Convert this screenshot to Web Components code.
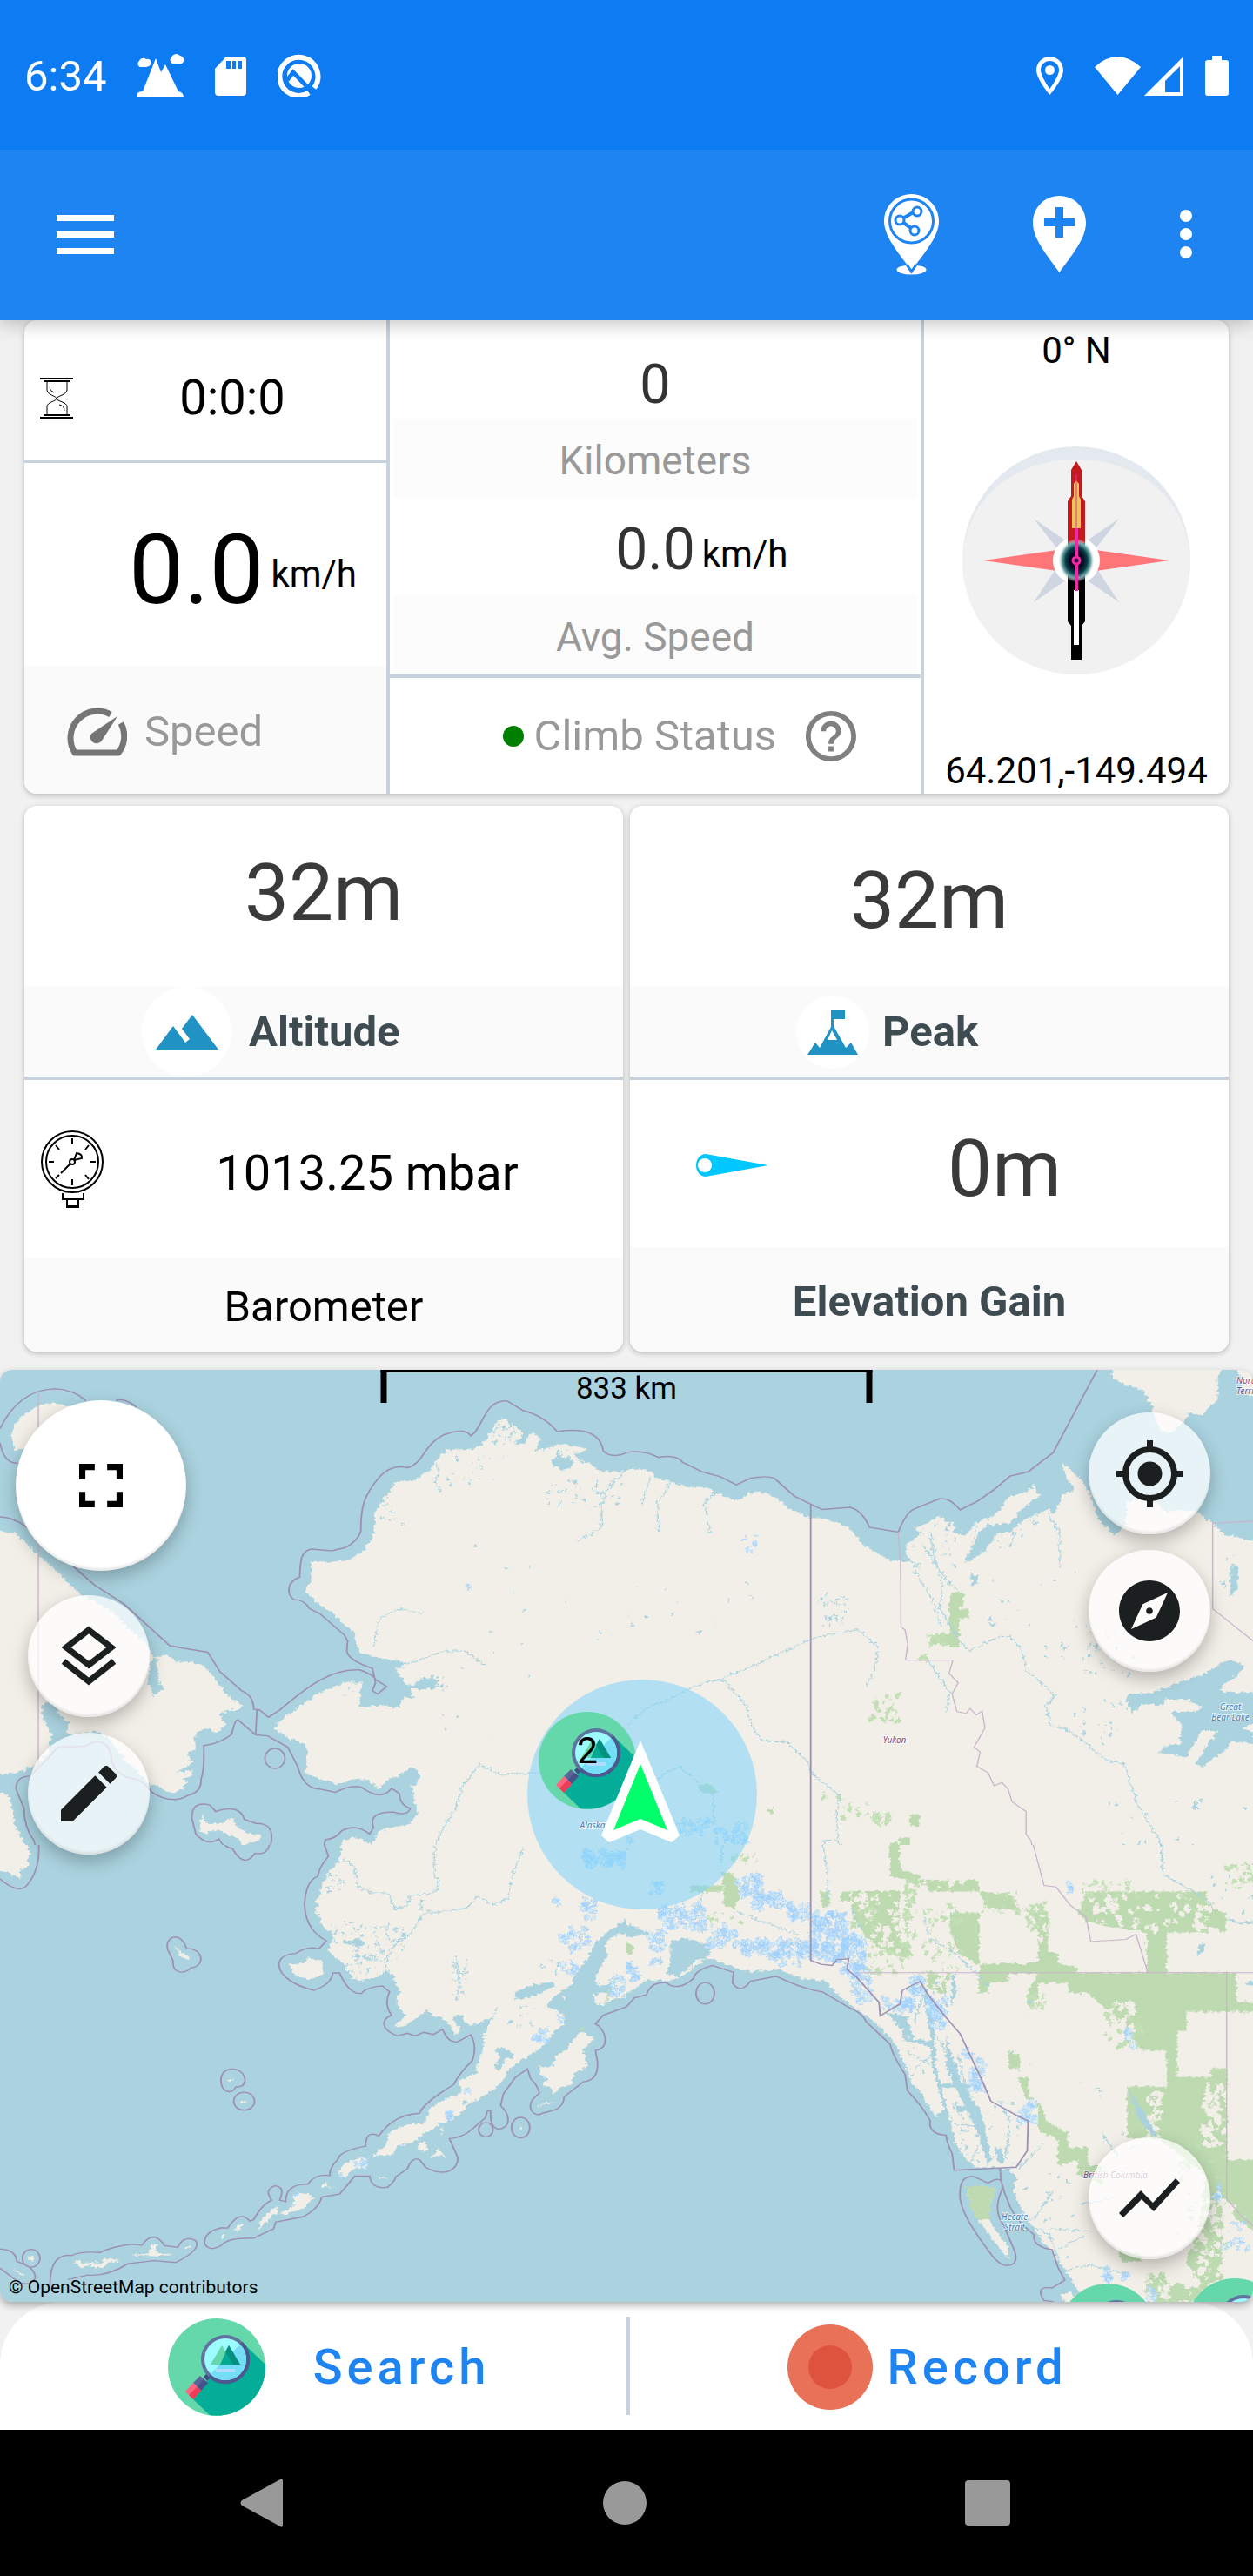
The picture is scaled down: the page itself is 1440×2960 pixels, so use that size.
<!DOCTYPE html>
<html lang="en">
<head>
<meta charset="utf-8">
<meta name="viewport" content="width=device-width, initial-scale=1">
<title>Altimeter</title>
<style>
  html, body { margin: 0; }
  body { background: #f1f1f1; font-family: Roboto, "Liberation Sans", sans-serif; color: #000; }
</style>
</head>
<body>
<trek-app></trek-app>

<script>
const base = `
  * { box-sizing: border-box; }
  button { border: 0; padding: 0; margin: 0; background: none; font: inherit; color: inherit; cursor: pointer; }
  svg { display: block; flex: none; }
`;
const define = (name, css, html) => customElements.define(name, class extends HTMLElement {
  constructor() {
    super();
    this.attachShadow({ mode: 'open' }).innerHTML = `<style>${base}${css}</style>${html}`;
  }
});

const magnifier = `
  <circle cx="56" cy="56" r="56" fill="#64d8ab"/>
  <path d="M85 27 L112 53 A56 56 0 0 1 48 111 L29 93 L50 66Z" fill="#03ad97"/>
  <path d="M41 67 l7 -7 5 4 -8 8Z" fill="#3f4d86"/>
  <path d="M37 66 L46 74 L38 83 L29 74Z" fill="#5a6599"/>
  <path d="M41 70 L46 74 L38 83 L33 79Z" fill="#46538b"/>
  <path d="M29 74 L38 83 L29 93 L20 84Z" fill="#ff6480"/>
  <path d="M33 79 L38 83 L29 93 L24 88Z" fill="#ee3c57"/>
  <circle cx="66" cy="47" r="28" fill="#5f739f"/>
  <path d="M86 27 A28 28 0 0 1 46 67Z" fill="#4a5a8f"/>
  <circle cx="66" cy="47" r="24" fill="#9cfcff"/>
  <path d="M83 30 A24 24 0 0 1 49 64Z" fill="#74def7"/>
  <path d="M62 31 L75 53 H49Z" fill="#64d8ab"/>
  <path d="M70 31 L83 53 H60Z" fill="#03a990"/>
  <path d="M70 31 L83 53 H75 L66 38Z" fill="#03907f"/>
  <rect x="55" y="58" width="22" height="4" fill="#b5daff"/>
`;

define('status-bar', `
  :host { display: flex; justify-content: space-between; align-items: center; height: 172px; position: relative; z-index: 2;
    padding: 2px 28px 0; background: #0d7bf2; color: #fff; font-size: 49px; }
  div { display: flex; align-items: center; }
  .left { gap: 36px; }
  .right { gap: 36px; }
  .net { gap: 4px; }
  .power { gap: 25px; }
`, `
  <div class="left">
    <time>6:34</time>
    <svg width="53" height="52" viewBox="0 0 53 52" fill="#fff">
      <path d="M0 51 V46 Q2 44 6 44 L21 6 L27 22 L32 13 L47 44 Q53 45 53 51Z"/>
      <path d="M3 16 A4 4 0 0 1 2 9 A5 5 0 0 1 10 7 A4 4 0 0 1 13 15 L10 16Z"/>
      <path d="M41 12 A4 4 0 0 1 39 5 A6 6 0 0 1 49 3 A5 5 0 0 1 51 12Z"/>
    </svg>
    <svg width="36" height="45" viewBox="0 0 36 45" fill="#fff" fill-rule="evenodd">
      <path d="M13 0 H32 Q36 0 36 4 V41 Q36 45 32 45 H4 Q0 45 0 41 V14Z M13 5 V14 H18 V5Z M20 5 V14 H24 V5Z M27 5 V14 H31 V5Z"/>
    </svg>
    <svg width="50" height="50" viewBox="0 0 50 50" fill="none" stroke="#fff">
      <path d="M36 44.500 A22 22 0 1 1 42 39" stroke-width="6"/>
      <circle cx="25" cy="25" r="14" fill="#fff" stroke="none"/>
      <path d="M11 30 L18 21 L38 42" stroke="#0d7bf2" stroke-width="5"/>
    </svg>
  </div>
  <div class="right">
    <svg width="31" height="45" viewBox="0 0 31 45" fill="#fff" fill-rule="evenodd">
      <path d="M15.500 0 C24 0 31 7 31 15.500 C31 26 15.500 44 15.500 44 S0 26 0 15.500 C0 7 7 0 15.500 0Z M15.500 5 C9.500 5 5 9.500 5 15.500 C5 23 15.500 37 15.500 37 S26 23 26 15.500 C26 9.500 21.500 5 15.500 5Z"/>
      <circle cx="15.500" cy="15.500" r="5.500"/>
    </svg>
    <div class="power">
      <div class="net">
        <svg width="53" height="45" viewBox="0 0 53 45" fill="#fff"><path d="M0 12 Q26 -12 53 12 L26.500 44Z"/></svg>
        <svg width="45" height="45" viewBox="0 0 45 45" fill="#fff" fill-rule="evenodd"><path d="M45 0 V45 H0Z M41 11 L24 28 V41 H41Z"/></svg>
      </div>
      <svg width="27" height="46" viewBox="0 0 27 46" fill="#fff"><path d="M8 0 H19 V5 H24 Q27 5 27 8 V43 Q27 46 24 46 H3 Q0 46 0 43 V8 Q0 5 3 5 H8Z"/></svg>
    </div>
  </div>
`);

define('app-bar', `
  :host { display: flex; justify-content: space-between; align-items: center; height: 196px;
    padding: 0 70px 2px 65px; background: #1e84f2; position: relative; z-index: 1;
    box-shadow: 0 4px 20px rgba(0,0,0,.24); }
  div { display: flex; align-items: center; gap: 108px; }
`, `
  <button aria-label="Menu"><svg width="66" height="46" viewBox="0 0 66 46" fill="#fff"><path d="M0 1H66V8H0Z M0 20H66V27H0Z M0 39H66V46H0Z"/></svg></button>
  <div>
    <button aria-label="Share location"><svg width="63" height="93" viewBox="0 0 63 93">
      <ellipse cx="31.500" cy="87" rx="17" ry="5.500" fill="#fff"/>
      <path d="M31.500 0 C49 0 63 14 63 31 C63 49 46 68 31.500 88 C17 68 0 49 0 31 C0 14 14 0 31.500 0Z" fill="#fff"/>
      <path d="M26 81 L31.500 89 L37 81" fill="none" stroke="#1e84f2" stroke-width="3"/>
      <circle cx="31.500" cy="31" r="25" fill="none" stroke="#1e84f2" stroke-width="3"/>
      <g fill="#fff" stroke="#1e84f2" stroke-width="3"><path d="M18 30 L37 19 M18 30 L34 41" stroke-width="4"/>
      <circle cx="18" cy="30" r="5"/><circle cx="38" cy="20" r="5"/><circle cx="35" cy="42" r="5"/></g>
    </svg></button>
    <button aria-label="Add place"><svg width="61" height="88" viewBox="0 0 61 88">
      <path d="M30.500 0 C48 0 61 14 61 31 C61 49 45 68 30.500 88 C16 68 0 49 0 31 C0 14 13 0 30.500 0Z" fill="#fff"/>
      <path d="M26 13H35V26H48V35H35V48H26V35H13V26H26Z" fill="#1e84f2"/>
    </svg></button>
    <button aria-label="More options"><svg width="14" height="56" viewBox="0 0 14 56" fill="#fff"><circle cx="7" cy="7" r="7"/><circle cx="7" cy="28" r="7"/><circle cx="7" cy="49" r="7"/></svg></button>
  </div>
`);

define('compass-rose', `:host { display: block; }`, `
  <svg width="264" height="264" viewBox="-132 -132 264 264">
    <defs>
      <radialGradient id="hub"><stop offset=".35" stop-color="#0c0520"/><stop offset=".6" stop-color="#043f47"/><stop offset=".8" stop-color="#6ea7a8"/><stop offset="1" stop-color="#fff" stop-opacity="0"/></radialGradient>
      <linearGradient id="south" x2="0" y2="1"><stop offset="0" stop-color="#04464c"/><stop offset=".3" stop-color="#000"/></linearGradient>
    </defs>
    <circle r="131" fill="#e4e9ef"/>
    <path d="M-131 0 C-124 -155 124 -155 131 0 A131 131 0 0 1 -131 0Z" fill="#f1f1f1"/>
    <path d="M-49 -48 L-14 -24 L14 24 L49 48 L24 10 L-24 -16Z M49 -48 L14 -24 L-14 24 L-49 48 L-24 10 L24 -16Z" fill="#cfd6e2"/>
    <path d="M-107 0 L-22 -12 V12Z M107 0 L22 -12 V12Z" fill="#ff7679"/>
    <path d="M-12 0 L0 -100 L12 0 L0 100Z" fill="#3fa5ea"/>
    <circle r="27" fill="#fff"/>
    <path d="M-10 -20 V-68 L-6 -74 V-104 L0 -114 L6 -104 V-74 L10 -68 V-20Z" fill="#c31a20"/>
    <path d="M-10 -20 V70 L-6 75 V114 H6 V75 L10 70 V-20Z" fill="url(#south)"/>
    <ellipse rx="21" ry="25" fill="url(#hub)"/>
    <path d="M-5 -37 V-70 L-3 -74 V-88 L0 -92 L3 -88 V-74 L5 -70 V-37Z" fill="#ecc45c"/>
    <path d="M-3 34 H3 V97 H-3Z" fill="#fff"/>
    <path d="M0 -99 V-37" stroke="#ef2a9b" stroke-width="1"/>
    <path d="M0 -37 V35" stroke="#f129a9" stroke-width="4"/>
    <circle r="4" fill="#400a40" stroke="#f129a9" stroke-width="3"/>
  </svg>
`);

define('trip-card', `
  :host { display: grid; grid-template-columns: 416fr 4px 610fr 4px 350fr; background: #fff;
    border-radius: 14px; overflow: hidden; box-shadow: 0 2px 6px rgba(0,0,0,.24); }
  .line { background: #c8d2dc; }
  .col { display: flex; flex-direction: column; min-width: 0; }
  .rule { height: 4px; background: #c8d2dc; }
  .time { height: 160px; padding: 18px 0 0 18px; display: flex; align-items: center; gap: 6px; font-size: 56px; }
  .time span { flex: 1; text-align: center; }
  .speed { height: 234px; padding: 10px 34px 0 0; display: flex; justify-content: flex-end; align-items: center; gap: 8px; font-size: 112px; }
  .unit { font-size: 42px; padding-top: 10px; }
  .speed-label { height: 146px; padding: 2px 0 0 48px; display: flex; align-items: center; gap: 20px;
    background: #fafafa; color: #999; font-size: 49px; }
  .km { height: 113px; padding-top: 34px; display: flex; align-items: center; justify-content: center; font-size: 63px; color: #333; }
  .label { height: 91px; margin: 0 4px; padding-top: 4px; display: flex; align-items: center; justify-content: center;
    background: #fcfcfc; color: #999; font-size: 46px; }
  .avg { height: 112px; padding-top: 6px; display: grid; grid-template-columns: 1fr auto 1fr; gap: 8px; align-items: center; font-size: 66px; }
  .avg .value { grid-column: 2; color: #333; }
  .climb { height: 133px; padding-right: 74px; display: flex; align-items: center; justify-content: flex-end; gap: 12px; font-size: 49px; color: #999; }
  .dot { width: 24px; height: 24px; border-radius: 50%; background: green; }
  .climb button { margin-left: 22px; }
  .heading { align-items: center; justify-content: space-between; padding: 10px 0 2px; font-size: 42px; line-height: 49px; }
`, `
  <div class="col">
    <div class="time">
      <svg width="38" height="47" viewBox="0 0 38 47" fill="none" stroke="#000" stroke-width="1">
        <path d="M0 1H38 M0 46H38" stroke-width="2"/><path d="M4 4H35 M4 43H35" stroke-width="2"/>
        <path d="M8 5V14C8 20 19 21 19 24S8 28 8 33V43 M31 5V14C31 20 19 21 19 24S31 28 31 33V43 M11 11Q11 15 16 17 M22 31Q28 32 28 38"/>
      </svg>
      <span>0:0:0</span>
    </div>
    <div class="rule"></div>
    <div class="speed"><span>0.0</span><span class="unit">km/h</span></div>
    <div class="speed-label">
      <svg width="70" height="57" viewBox="0 0 70 57">
        <path d="M51 9 A31 31 0 0 0 10 53 H60 A31 31 0 0 0 63 19" fill="none" stroke="#757575" stroke-width="7" stroke-linejoin="round"/>
        <path d="M59 11 L41 39 A7 7 0 1 1 29 31Z" fill="#757575"/>
      </svg>
      <span>Speed</span>
    </div>
  </div>
  <div class="line"></div>
  <div class="col">
    <div class="km">0</div>
    <div class="label">Kilometers</div>
    <div class="avg"><span class="value">0.0</span><span class="unit">km/h</span></div>
    <div class="label">Avg. Speed</div>
    <div class="rule"></div>
    <div class="climb"><i class="dot"></i><span>Climb Status</span>
      <button aria-label="Climb status help"><svg width="58" height="58" viewBox="2 2 20 20" fill="#808080"><path d="M11 18h2v-2h-2v2zm1-16C6.480 2 2 6.480 2 12s4.480 10 10 10 10-4.480 10-10S17.520 2 12 2zm0 18c-4.410 0-8-3.590-8-8s3.590-8 8-8 8 3.590 8 8-3.590 8-8 8zm0-14c-2.210 0-4 1.790-4 4h2c0-1.100.9-2 2-2s2 .9 2 2c0 2-3 1.750-3 5h2c0-2.250 3-2.500 3-5 0-2.210-1.790-4-4-4z"/></svg></button>
    </div>
  </div>
  <div class="line"></div>
  <div class="col heading"><span>0° N</span><compass-rose></compass-rose><span>64.201,-149.494</span></div>
`);

define('metric-card', `
  :host { display: flex; flex-direction: column; flex: 1; min-width: 0; background: #fff;
    border-radius: 14px; overflow: hidden; box-shadow: 0 2px 6px rgba(0,0,0,.24); }
`, `<slot></slot>`);

define('metric-row', `
  :host { display: flex; align-items: center; justify-content: center; font-size: 91px; color: #3a3a3a; }
  :host([size="tall"]) { height: 208px; padding-bottom: 8px; }
  :host([size="tall-low"]) { height: 208px; padding-top: 10px; }
  :host([size="gauge"]) { height: 205px; gap: 8px; padding-left: 18px; font-size: 56px; color: #000; }
  :host([size="gain"]) { height: 192px; gap: 14px; padding: 4px 0 0 76px; }
  ::slotted(span) { flex: 1; text-align: center; padding-top: 8px; }
`, `<slot></slot>`);

define('metric-label', `
  :host { display: flex; align-items: center; background: #fafafa; font-size: 49px; font-weight: 700; color: #3e4c52; }
  :host([size="icon"]) { height: 103px; }
  :host([size="plain"]) { height: 107px; padding-top: 4px; justify-content: center; font-weight: 400; color: #000; }
  :host([size="bold"]) { height: 120px; padding-top: 4px; justify-content: center; }
`, `<slot></slot>`);

define('metric-rule', `:host { display: block; height: 4px; background: #c8d2dc; }`, ``);

define('metric-cards', `
  :host { display: flex; gap: 8px; }
  .disc { display: flex; align-items: center; justify-content: center; background: #fff; border-radius: 50%; }
  .alt { width: 103px; height: 103px; margin: 0 20px 0 135px; }
  .peak { width: 84px; height: 84px; margin: 0 15px 0 191px; }
`, `
  <metric-card>
    <metric-row size="tall">32m</metric-row>
    <metric-label size="icon"><div class="disc alt">
      <svg width="72" height="40" viewBox="0 0 72 40" fill="#2092c4"><path d="M0 40 L20 13 L34 32 L39 28 L30 16 L42 0 L72 40Z"/></svg></div>Altitude</metric-label>
    <metric-rule></metric-rule>
    <metric-row size="gauge">
      <svg width="74" height="90" viewBox="0 0 74 90" fill="none" stroke="#000" stroke-width="2">
        <circle cx="37" cy="36" r="35"/><circle cx="37" cy="36" r="30"/>
        <path d="M37 9V16 M37 56V63 M10 36H16 M58 36H64 M18 17L22 22 M56 17L52 22 M52 51L56 56 M18 55L22 51 M24 49L35 38"/>
        <circle cx="37" cy="36" r="3"/><path d="M39 34L42 26Q49 27 48 32L39 34"/>
        <path d="M26 72V79H50V72 M31 79V88H44V79 M31 87H44"/>
      </svg>
      <span>1013.25 mbar</span>
    </metric-row>
    <metric-label size="plain">Barometer</metric-label>
  </metric-card>
  <metric-card>
    <metric-row size="tall-low">32m</metric-row>
    <metric-label size="icon"><div class="disc peak">
      <svg width="58" height="52" viewBox="0 0 58 52"><path d="M0 52 L9 38 L14 44 L27 20 V0 H43 V11 H30 V19 L44 44 L50 38 L58 52Z" fill="#2092c4"/><path d="M28 24 L23 35 H34Z" fill="#fff"/></svg></div>Peak</metric-label>
    <metric-rule></metric-rule>
    <metric-row size="gain">
      <svg width="83" height="26" viewBox="0 0 83 26"><path d="M11 0 L83 13 L11 26 A11 13 0 0 1 11 0Z" fill="#00c8ff"/><circle cx="10" cy="13" r="8" fill="#fff"/></svg>
      <span>0m</span>
    </metric-row>
    <metric-label size="bold">Elevation Gain</metric-label>
  </metric-card>
`);

define('map-button', `
  :host { display: block; }
  button { display: flex; align-items: center; justify-content: center; width: 140px; height: 140px; border-radius: 50%;
    background: rgba(255,255,255,.72); color: #1c1f1f; box-shadow: 0 8px 20px rgba(0,0,0,.26), inset 0 -3px 2px rgba(190,190,190,.3); }
  :host([big]) button { width: 196px; height: 196px; background: #fff; color: #000; }
`, `<button><slot></slot></button>`);

/* Each tile of the base map is traced in its own 1568-unit square. */
const tiles = [
  { x: 0, y: 1560, w: 720, h: 580,
    land: `M28 240 40 205 60 180 85 155 130 140 170 150 190 160 200 260 60 280 38 290 30 265Z
      M-40 530 40 545 85 600 130 650 165 690 200 735 240 760 290 800 330 850 360 880 385 930 420 925 440 945 475 945 510 955 540 1000 570 1050 607 1080 600 1095 570 1095 550 1110 565 1140 540 1165 515 1150 500 1160 487 1180 490 1215 470 1230 480 1260 440 1290 485 1280 480 1300 455 1310 475 1320 445 1350 420 1350 400 1335 370 1320 330 1270 300 1230 270 1180 240 1160 210 1165 165 1170 125 1210 120 1230 90 1265 40 1290 -40 1300Z
      M-40 1330 20 1360 30 1400 40 1460 60 1510 80 1568 90 1610 -40 1610Z
      M1610 350 1540 355 1500 355 1480 330 1450 320 1440 300 1470 285 1440 275 1400 270 1360 285 1340 290 1355 250 1330 230 1310 270 1290 270 1310 235 1280 205 1255 188 1240 205 1225 240 1200 275 1180 285 1120 285 1090 320 1080 345 1040 378 990 385 965 430 940 475 935 550 910 600 880 625 820 637 780 632 778 700 765 722 790 760 830 790 860 830 885 850 900 915 945 930 970 940 1005 940 1010 965 985 960 1000 1000 1030 1020 1060 995 1100 1000 1085 1030 1030 1030 1035 1060 1010 1055 1000 1090 960 1080 900 1085 905 1010 860 1010 800 1040 760 1075 700 1130 685 1155 720 1180 760 1200 770 1220 765 1290 800 1310 850 1325 880 1310 920 1310 950 1340 970 1310 1000 1300 1030 1270 1050 1290 1045 1320 1030 1330 1045 1420 1025 1450 980 1460 950 1470 930 1515 890 1490 860 1500 848 1530 840 1610 1610 1610Z
      M505 1415 515 1445 545 1450 580 1430 590 1455 625 1480 655 1485 650 1500 620 1510 610 1530 600 1500 560 1475 540 1465 515 1480 500 1465Z`,
    water: `M105 1080 130 1070 150 1110 170 1135 170 1180 120 1210 130 1170 110 1130Z M370 1000 380 930 395 935 395 1000 410 1030 385 1050Z M1380 320 1400 305 1435 320 1430 340 1410 350 1385 335Z M960 945 985 950 1000 990 1025 1020 1010 1025 985 1000Z`,
    border: `M0 220C20 170 60 100 135 97C170 97 200 115 215 135M290 133Q315 125 342 155M0 265Q10 330 45 328
      M0 495Q30 495 65 525L185 650 235 705 310 765 425 895 460 903 520 915 550 975 605 1035Q635 1050 635 1092L650 1095 672 1117 700 1095C770 1020 830 965 900 970Q935 985 940 1000L968 1022 945 1045 932 1035 940 1010 932 965Q870 940 868 910L870 880 862 862 800 795 775 780Q760 750 735 752C715 730 720 695 750 682C752 640 750 600 780 595L830 600 865 590Q895 570 903 540C903 460 910 430 950 370Q980 330 1020 342C1060 330 1060 270 1110 240Q1165 215 1178 243C1210 220 1210 130 1270 135L1310 165Q1360 180 1395 230Q1500 210 1510 290Q1530 315 1568 295
      M643 1095L640 1170M75 1300Q40 1300 40 1340L60 1400Q60 1460 85 1500L97 1568
      M75 1300Q110 1260 145 1210L215 1207Q260 1170 278 1230Q275 1280 320 1305Q355 1305 380 1350Q430 1390 470 1360Q505 1350 503 1310Q512 1280 510 1205Q550 1200 580 1170Q590 1110 600 1130L640 1172 670 1175 720 1210 745 1270Q760 1340 800 1340L840 1350Q880 1325 905 1335Q955 1380 980 1338L1000 1355Q1000 1390 1027 1400Q1020 1425 985 1412Q920 1410 935 1460L925 1480Q890 1445 855 1470Q840 1495 815 1497Q805 1530 822 1550L812 1568
      M480 1430Q480 1375 525 1390L540 1410Q600 1385 612 1435L640 1447Q680 1445 680 1490Q680 1545 635 1535Q610 1575 585 1530Q560 1525 548 1495Q520 1520 490 1480Z M663 1245a25 31 0 1 0 50 0a25 31 0 1 0 -50 0`,
    inner: `M96 110V1280`,
    river: `M1568 1255 1500 1280 1450 1280 1400 1275 1360 1290 1250 1295 1200 1262 1160 1330 1140 1400 1100 1480 1080 1568M935 900 940 860 950 810 1000 780 1060 795M960 960 1040 945 1100 915 1160 910 1220 960M1568 350 1540 380 1508 425 1505 530 1440 572M1090 310 1098 350 1090 390 1105 420`,
    green: ``, lakes: [[1370,370,190,90,46],[1230,190,80,80,50],[1390,280,80,50,26],[1110,290,160,120,24],[950,430,60,90,14],[1060,990,60,50,18],[850,1010,60,50,8],[1000,500,540,700,22]], ice: [[1165,700,20,20,2]], holes: [] },
  { x: 720, y: 1560, w: 720, h: 580,
    land: `M-40 350 30 345 60 355 80 375 110 385 160 405 210 405 240 430 280 442 320 415 360 425 410 470 450 495 510 505 560 530 590 580 660 630 710 635 745 665 700 620 700 580 740 545 720 530 760 510 785 490 800 510 820 510 820 545 850 550 880 510 930 480 960 430 1000 420 1020 395 1033 430 990 470 960 515 905 520 880 545 855 610 845 640 900 600 925 545 960 540 1000 500 1060 470 1070 490 1090 430 1120 410 1100 370 1090 325 1140 380 1165 440 1180 500 1220 550 1250 520 1250 450 1300 420 1350 480 1390 470 1430 480 1470 520 1500 550 1610 582 1610 1610 -40 1610Z
      M1215 65 1222 0 1500 0 1480 60 1480 130 1440 180 1410 170 1395 200 1360 235 1340 230 1320 180 1315 150 1290 100 1250 85Z M1530 38 1545 100 1610 160 1610 0Z`,
    water: `M1250 1060 1260 1045 1320 1040 1400 1000 1440 985 1510 937 1550 960 1480 1035 1610 1045 1610 1110 1540 1150 1568 1165 1568 1200 1510 1190 1500 1220 1440 1270 1425 1260 1440 1225 1480 1160 1440 1160 1400 1240 1330 1225 1350 1205 1385 1200 1390 1140 1360 1100 1420 1100 1440 1085 1400 1060 1350 1060 1340 1080 1290 1075 1262 1105Z M862 670 882 680 880 700 865 712Z M1510 650 1530 650 1530 720 1512 740Z M1412 1400 1423 1375 1435 1405Z M910 825 925 825 915 840Z`,
    border: `M461 455V1568M0 295Q40 285 80 310Q125 300 140 325L190 355 235 370 275 395 310 375Q350 365 370 375L420 430 461 455 490 472 560 465Q590 475 608 527L680 542Q700 480 720 470Q740 460 780 440Q805 430 835 473L880 445 920 410 960 368 1005 355 1068 295 1178 38`,
    inner: `M680 542 686 640 687 838 697 845 704 890 698 940 817 940 807 980 830 1010 815 1045 827 1100 850 1105 860 1090 875 1110 890 1098 897 1150 870 1210 885 1225 877 1270 905 1290 920 1330 940 1320 955 1340 965 1380 1000 1410 1000 1480 1012 1500 1025 1568M1568 508 1467 515V780L1568 880`,
    river: `M832 880 862 910 930 868 960 865 990 910 1000 975 1040 1010 1072 1050 1050 1080 1060 1140 1110 1160 1200 1250 1245 1262 1280 1390 1335 1500 1342 1568M0 1140 50 1090 110 1060 160 1025 210 1005 245 1005 300 1080 312 1140 340 1190 400 1192 450 1250 470 1300 535 1360 525 1420 530 1510 600 1550M220 1005 330 950 400 910 470 870 580 845 630 900 620 970 600 1020M720 660 760 740 790 840M760 540 770 620 790 700 785 780 832 880M740 580 800 690 830 720M1055 480 1085 550 1085 650M490 1568 495 1500 530 1497M755 940 810 1040 800 1100M38 460 60 370M80 540 78 450 110 385M230 410 195 450 210 545M960 590 975 540M75 1310 130 1270 170 1310 215 1360 220 1450`,
    green: `M808 740H832V900H808Z M815 728H843V775H815Z M760 862H810V890H760Z M820 780H856V810H830Z M708 1420H733V1455H708Z M684 1490H709V1525H684Z M658 1508H683V1610H658Z M782 1545H805V1557H782Z M180 1330 205 1325 230 1350 190 1355Z M350 1405 370 1400 365 1420Z`,
    lakes: [[700,500,130,160,40],[480,725,80,110,34],[870,500,120,90,24],[1140,820,130,170,44],[1120,1060,120,150,22],[1030,890,90,80,10],[1190,1360,370,200,16],[0,690,320,180,12],[1480,600,50,120,10],[1000,490,40,40,6],[880,640,300,200,12]],
    ice: [[120,1430,90,50,26],[220,1445,80,70,26],[290,550,40,50,6],[0,1480,20,90,14]], holes: [], moss: [[610,1050,75,80,26],[615,1420,45,35,26],[735,910,20,30,8],[540,1380,70,50,8],[490,1350,50,30,8],[760,860,60,40,14]] },
  { x: 0, y: 2120, w: 720, h: 540,
    land: `M-40 -40 60 -40 75 30 70 70 50 85 52 112 25 95 -40 70Z
      M860 -40 850 50 825 90 805 130 800 175 785 185 800 200 785 215 800 235 805 270 830 290 835 310 820 350 840 375 860 400 880 445 910 453 945 440 970 415 985 440 1000 490 990 520 1000 545 1015 570 1000 590 985 605 1010 605 1040 580 1070 550 1085 570 1105 575 1120 590 1140 632 1150 620 1135 580 1150 560 1165 590 1175 605 1235 575 1225 595 1210 630 1212 660 1200 720 1190 760 1150 790 1155 830 1120 845 1080 875 1060 930 1030 930 1000 940 970 970 965 1005 930 1040 980 1035 1000 1000 1030 995 1060 965 1100 930 1120 920 1150 900 1170 870 1200 845 1240 810 1265 780 1270 750 1310 715 1345 685 1375 655 1385 620 1415 600 1410 565 1370 540 1380 510 1430 470 1440 430 1470 380 1490 330 1520 290 1560 255 1610 240 1610 -40Z
      M1610 280 1540 300 1515 325 1520 370 1495 430 1490 465 1510 470 1540 450 1520 490 1485 500 1490 530 1510 535 1530 520 1610 490Z
      M1455 625 1485 640 1480 660 1460 680 1470 740 1440 760 1430 800 1400 810 1385 835 1380 810 1360 800 1370 780 1350 765 1350 740 1385 735 1390 705 1420 680 1440 640Z
      M1345 880 1355 860 1390 858 1360 865Z M845 1090 865 1060 900 1040 920 1045 920 1075 880 1085 865 1110 848 1105Z M722 400 760 395 770 375 805 385 808 435 775 450 735 430Z
      M735 1165 765 1160 785 1175 760 1210 715 1235 700 1230 735 1205Z M672 1225 695 1205 695 1225 665 1260 645 1285 655 1250Z M438 335 450 355 480 385 450 372Z
      M330 1370 370 1360 383 1330 392 1335 390 1360 440 1368 390 1372Z M185 1390 200 1385 205 1395 235 1395 240 1385 245 1400 265 1380 300 1385 270 1395 250 1415 230 1402 200 1410Z
      M462 1343 475 1335 478 1342 466 1348Z M30 1412 45 1420 68 1442 55 1438Z M70 1378 78 1372 86 1380 78 1388Z M570 782 587 780 576 790Z M603 855 617 855 610 862Z M1300 945 1307 935 1306 952Z M945 1105 968 1112 955 1114Z M1045 1000 1065 990 1070 1020 1050 1020Z M1080 1045 1095 1015 1120 1045 1100 1035Z M1105 940 1112 950 1105 970Z M805 1140 815 1125 820 1140 845 1145Z M585 1285 605 1262 605 1285Z M550 1310 560 1300 560 1312Z M1408 505 1418 508 1412 516Z`,
    water: `M1290 490 1340 465 1380 458 1390 470 1350 495 1310 515 1290 512Z M1240 680 1255 672 1285 695 1285 715 1265 710 1250 755 1238 745 1250 710Z M860 320 900 312 915 330 900 345 885 330 865 330Z`,
    border: `M0 113Q50 170 70 130Q100 80 97 0
      M563 0Q570 10 582 12Q610 80 638 28Q668 35 674 0
      M812 0 822 38Q800 70 795 105Q765 120 762 200C765 270 790 300 817 320L798 347Q770 335 740 362Q700 365 698 400C700 440 740 470 785 485Q830 465 833 427L850 427C860 460 880 500 905 495Q915 475 957 470L975 490Q960 530 980 568C955 580 950 615 995 637L1020 628 1040 637 1060 625 1085 632 1108 615Q1120 660 1145 657L1178 633Q1195 670 1182 720Q1150 760 1135 800Q1060 860 1050 895C990 900 965 940 948 970Q915 950 915 1005Q850 1020 845 1050Q825 1075 825 1103Q790 1095 770 1132Q715 1130 715 1190L700 1185Q715 1140 688 1137Q660 1150 680 1185Q655 1200 635 1250L625 1255Q600 1215 570 1278L555 1277Q510 1290 512 1330Q525 1360 555 1335Q570 1310 635 1312L685 1280 690 1258Q740 1245 760 1240Q800 1210 805 1175L850 1165 888 1105 925 1105Q930 1150 970 1142Q990 1120 990 1108L1020 1080Q1030 1040 1050 1050L1065 1075C1110 1110 1150 1085 1145 1040L1125 980Q1160 975 1180 950L1215 910 1220 887 1228 887Q1225 950 1252 948C1285 935 1270 890 1253 870L1260 830 1290 775 1320 747 1328 780Q1345 800 1350 828C1315 860 1325 900 1350 900C1365 885 1410 895 1412 840L1460 790Q1500 785 1495 720L1490 685C1530 680 1515 610 1490 597L1510 568 1568 540
      M420 350C410 310 450 280 467 345C510 345 515 405 478 410C465 430 430 435 433 385Z M553 785C553 730 613 740 613 785C613 805 600 808 590 808C580 835 553 825 553 785Z M585 855a26 30 0 1 0 52 0a26 30 0 1 0 -52 0 M1198 950a18 24 0 1 0 36 0a18 24 0 1 0 -36 0 M1280 943a23 34 0 1 0 46 0a23 34 0 1 0 -46 0 M56 1379a22 30 0 1 0 44 0a22 30 0 1 0 -44 0
      M125 1470Q125 1360 180 1370Q200 1355 250 1360Q280 1340 330 1332L355 1335Q385 1280 412 1337L445 1342Q460 1300 490 1320Q505 1350 440 1393L385 1387 320 1397Q270 1440 220 1435L170 1450 M0 1348Q40 1350 42 1390Q90 1410 88 1445Q80 1470 50 1462L0 1412`,
    inner: ``,
    river: `M860 45 890 80 893 135 930 160 970 160 990 215 1020 200 1025 170 1085 160 1100 130 1085 90 1090 0M1310 10 1280 110 1270 180 1235 200 1195 170 1170 210 1060 230 1030 290 975 350 965 410M1140 370 1150 430 1145 520M1165 430 1135 425M1235 575 1245 540`,
    green: `M1520 490 1535 455 1545 470 1515 525Z M1452 610 1465 605 1458 625Z`,
    lakes: [[830,250,70,80,18],[880,260,130,130,60],[865,370,80,70,40],[1130,380,40,130,24],[820,100,40,60,14],[1045,180,40,40,12],[950,290,80,80,20],[1270,590,60,20,10],[1160,850,80,60,14],[1300,520,40,50,8],[1340,380,60,50,8]],
    ice: [[1430,260,50,90,22],[1395,300,40,30,8],[1450,180,40,70,18],[1405,390,35,35,10],[1335,620,40,35,14],[1525,440,50,70,22],[1385,180,15,25,4],[1110,890,20,25,6],[1460,20,108,50,70],[1400,570,15,25,4],[885,1045,35,30,6],[1168,808,10,15,2],[848,1090,14,14,2],[738,1163,10,10,1]], holes: [] },
  { x: 720, y: 2120, w: 720, h: 540,
    land: `M-40 -40 1610 -40 1610 1610 1160 1610 1135 1500 1105 1430 1070 1370 1030 1300 990 1220 970 1160 975 1110 960 1080 875 1075 850 1050 820 990 800 940 770 900 735 820 715 800 690 710 670 660 630 600 580 550 520 490 500 455 440 445 380 415 310 425 270 410 200 375 150 430 110 455 50 450 20 480 -40 520Z
      M850 1140 900 1135 925 1150 910 1200 908 1250 955 1345 957 1382 925 1330 880 1250 860 1200Z M1085 1500 1110 1490 1130 1510 1130 1524 1095 1524Z`,
    water: `M110 320 150 310 210 335 210 370 170 390 130 440 100 430 110 380Z M-40 260 10 265 60 300 10 305 -40 310Z M280 450 300 425 340 415 300 440Z
      M740 480 752 480 770 600 775 740 808 900 835 1075 800 1010 775 900 795 880 765 740 760 640Z M800 640 830 760 840 790 890 900 912 1050 905 1075 880 960 820 800 800 740Z M690 640 760 655 770 675 700 655Z M650 560 700 570 720 650 705 640Z M780 795 870 800 870 812 790 808Z M820 870 880 875 880 885 825 890Z M920 1010 940 1015 945 1060 930 1060Z
      M1502 240 1530 258 1568 255 1568 262 1520 262Z M1435 330 1447 325 1445 355 1425 372Z M1545 460 1610 445 1610 480 1555 468Z M1255 810 1300 905 1330 975 1320 975 1280 910Z M815 430 822 430 825 500 812 535Z`,
    border: `M461 0V385L487 398 515 402 527 382 556 380 552 415 575 440 632 525 635 570 685 530 690 485 735 455 755 500 790 560 835 630 893 795 912 855 980 905 1005 920 1003 1020 975 1075 820 1085 815 1030Q800 990 800 968Q755 965 760 920Q740 870 703 820Q700 790 697 765Q665 700 660 665Q640 640 600 590Q590 560 560 545L490 490Q440 480 375 438L310 455Q285 500 265 460L268 425 215 402Q170 420 168 445Q130 490 100 460Q60 455 50 500L20 510 0 540
      M174 495a23 36 0 1 0 46 0a23 36 0 1 0 -46 0 M835 1180Q830 1100 870 1107L905 1128Q945 1095 940 1150Q915 1220 945 1270C960 1330 985 1370 970 1395Q945 1420 915 1370C870 1290 840 1230 835 1180Z M935 1080Q935 1130 955 1190Q970 1250 1020 1300Q1015 1340 1065 1350L1080 1410 1097 1452 1065 1478Q1020 1470 1045 1520L1070 1524`,
    inner: `M575 426H1568M1502 426V1180L1540 1240 1568 1270M1018 0 1045 135 1075 140 1110 200 1150 240 1162 322 1250 315 1275 298 1305 426`,
    river: `M1340 0 1342 100 1400 140 1470 200M190 150 185 210M275 220 330 250 430 300M490 0 505 100 500 210M560 210 590 280M745 240 755 300M760 310 830 370 905 470M720 600 740 500M980 1080 1040 1000M1010 1270 1060 1300 1080 1380M1020 1250 1070 1150M1060 1280 1160 1290M1080 1350 1150 1300M1100 1420 1160 1400 1250 1430M800 700 780 640M850 820 830 700M700 690 760 730M720 750 765 700M820 930 880 940M860 1060 890 980M950 1050 960 920 930 850M1190 960 1230 1040M1130 1200 1220 1180M0 10 -10 60M240 0 235 60`,
    green: `M563 154H684V320L708 330 708 380 680 370 640 350 600 310 590 290 565 240Z M658 -40H684V80L733 100V118H882V155H760L684 110 658 100Z M810 225H882V400L830 360 810 290Z M740 430 810 440 800 500 760 480Z
      M882 426V400L950 395 1030 395 1030 260 1005 225 1030 190 1055 225V360H1080V395L1128 410V426H1527V524H1610V556H1402V620H1378V774H1464V745H1502V1050H1610V1330L1520 1240 1490 1180 1490 1560 1435 1480 1400 1380 1430 1300 1450 1100 1330 980H1253V806H1352V684H1290L1250 600 1210 556 1180 524 1154 495 1104 490V460H1030V524L1005 490 1030 430H955V458H907V493H882Z
      M1150 155H1452V190L1478 220 1500 225V292H1352V426H1302V292L1155 258 1130 225Z M1030 850 1055 925 1105 960V1010H1155V1070H1190V1130L1130 1100V1050L1080 1070V985L1030 950Z M980 775H1005V830L1030 870 1000 850Z M955 684 985 700V745H957Z M1300 1430H1350V1455L1435 1480V1610H1300Z M485 155H510V200L490 210Z M536 155H560V188H536Z M240 90 265 95 285 160 270 215 245 200Z M0 320 20 340 10 365 -20 360Z M882 155 960 165 990 220 900 210Z M850 1140 900 1135 925 1150 910 1200 908 1250 880 1250 860 1200Z M158 158V135H240V155Z M1230 1350 1290 1370V1390H1240Z`,
    lakes: [[680,600,80,200,14],[820,850,160,220,46],[800,950,60,120,20],[960,1080,160,400,36],[1330,100,238,150,14],[130,340,70,80,16],[700,440,140,120,14],[960,500,60,250,6],[1130,780,60,60,5],[1180,960,100,80,5]],
    ice: [[80,200,120,80,70],[62,290,30,120,24],[0,390,30,60,20],[290,110,50,60,30],[320,160,80,50,40],[200,270,80,70,30],[290,320,180,50,90],[350,350,90,50,24],[405,200,60,50,30],[461,225,90,160,150],[540,300,60,130,70],[560,430,50,90,34],[640,515,80,35,36],[710,440,35,70,22],[755,510,45,100,44],[860,720,35,100,32],[980,860,45,60,22],[60,120,30,40,14],[1105,130,10,20,4],[1470,1130,15,60,7],[1190,1410,20,50,10],[1235,1430,20,25,6],[1490,1240,70,120,14],[1305,1480,25,45,9],[1230,620,40,50,6],[845,680,20,40,7],[275,120,8,20,3]],
    holes: [[560,160,120,220,60],[880,160,170,240,36],[1160,160,320,130,70],[1190,530,80,160,70],[1440,800,60,200,60],[1420,1180,100,330,110],[1300,820,40,160,30],[740,430,70,90,20],[1290,1440,150,120,40],[700,120,170,35,14]],
    moss: [[690,110,40,200,46],[740,200,100,240,70],[600,320,110,110,50],[880,155,120,70,26],[1000,190,50,110,26],[1130,120,150,60,30],[1500,60,68,90,26],[1005,490,45,60,18],[1200,560,100,120,40],[265,30,60,40,12],[200,220,90,40,12],[1380,1000,130,350,60],[560,200,60,100,20]] }
];

function seeded(seed) {
  return () => (seed = (seed * 16807) % 2147483647) / 2147483647;
}
/* Scatter small ragged patches over a box: ponds, glaciers, woods and clearings. */
function scatter(areas, size, rnd) {
  let d = '';
  for (const [x, y, w, h, n] of areas || []) for (let i = 0; i < n; i++) {
    const cx = x + rnd() * w, cy = y + rnd() * h, r = size * (0.35 + rnd());
    const pts = [];
    for (let k = 0; k < 6; k++) {
      const a = k / 6 * Math.PI * 2, q = r * (0.4 + rnd() * 0.9);
      pts.push(`${Math.round(cx + Math.cos(a) * q * 0.8)} ${Math.round(cy + Math.sin(a) * q * 1.3)}`);
    }
    d += `M${pts.join('L')}Z`;
  }
  return d;
}
function drawTile(t, i) {
  const rnd = seeded(97 + i * 131);
  return `<svg x="${t.x}" y="${t.y}" width="${t.w}" height="${t.h}" viewBox="0 0 1568 1568" preserveAspectRatio="none">
    <rect width="1568" height="1568" fill="#aad3df"/>
    <g filter="url(#ragged)">
      <path d="${t.land}" fill="#f2efe8"/>
      <path d="${t.green}" fill="#bddab1"/>
      <path d="${scatter(t.holes, 10, rnd)}" fill="#f2efe8"/>
      <path d="${scatter(t.moss, 7, rnd)}" fill="#c3dfb6"/>
      <path d="${t.water}${scatter(t.lakes, 4, rnd)}" fill="#aad3df"/>
      <path d="${scatter(t.ice, 9, rnd)}" fill="#ddecec" stroke="#9fcfff" stroke-width="2"/>
      <path d="${t.river}" fill="none" stroke="#aad3df" stroke-width="3"/>
    </g>
    <path d="${t.border}" fill="none" stroke="#9d90b3" stroke-width="4"/>
    <path d="${t.inner}" fill="none" stroke="#c9b4cb" stroke-width="3"/>
  </svg>`;
}

define('map-canvas', `
  :host { display: block; width: 100%; height: 100%; }
  svg.map { width: 100%; height: 100%; }
  text { font-family: "Noto Sans", "Open Sans", sans-serif; font-style: italic; font-size: 10px; text-anchor: middle;
    paint-order: stroke; stroke: rgba(255,255,255,.7); stroke-width: 2px; }
  .place { fill: #7b4f80; } .lake { fill: #4d80b3; }
  .count { font-family: Roboto, sans-serif; font-style: normal; font-size: 42px; stroke: none; fill: #000; }
`, `
  <svg class="map" viewBox="0 1574 1440 1071" preserveAspectRatio="xMidYMid slice" role="img" aria-label="Map of Alaska">
    <defs><filter id="ragged" filterUnits="userSpaceOnUse" x="-40" y="-40" width="1650" height="1650">
      <feTurbulence type="fractalNoise" baseFrequency=".09" numOctaves="3" seed="4"/>
      <feDisplacementMap in="SourceGraphic" scale="18" xChannelSelector="R" yChannelSelector="G"/>
    </filter></defs>
    <g>${tiles.map(drawTile).join('')}</g>
    <text class="place" x="1028" y="2003">Yukon</text>
    <text class="lake" x="1414" y="1965">Great</text>
    <text class="lake" x="1414" y="1977">Bear Lake</text>
    <text class="place" x="1431" y="1590">Nort</text>
    <text class="place" x="1431" y="1602">Terri</text>
    <text class="place" x="1282" y="2503">British Columbia</text>
    <text class="lake" x="1166" y="2551">Hecate</text>
    <text class="lake" x="1166" y="2563">Strait</text>
    <circle cx="738" cy="2062" r="132" fill="#82d4fa" fill-opacity=".57"/>
    <text class="lake" x="681" y="2101">Alaska</text>
    <g transform="translate(619 1967)">${magnifier}</g>
    <text class="count" x="675" y="2026">2</text>
    <path d="M736 2000 L781 2109 L772 2117 L736 2102 L700 2117 L691 2109Z" fill="#fff"/>
    <path d="M736 2027 L767 2103 L736 2090 L705 2103Z" fill="#00ff6a"/>
    <g transform="translate(1217 2624)">${magnifier}</g>
    <g transform="translate(1363 2618)">${magnifier}</g>
  </svg>
`);

define('map-view', `
  :host { display: flex; position: relative; flex: 1; min-height: 900px; border-radius: 14px; overflow: hidden;
    box-shadow: 0 4px 8px rgba(0,0,0,.3); z-index: 1; }
  map-canvas { position: absolute; inset: 0; }
  .scale { position: absolute; top: 0; left: 50%; width: 565px; height: 38px; transform: translateX(-50%);
    border: solid #000; border-width: 3px 7px 0; text-align: center; font-size: 35px; line-height: 37px; }
  .tools { position: absolute; display: flex; flex-direction: column; align-items: flex-start; gap: 18px; }
  .left { left: 18px; top: 35px; }
  .left map-button { margin-left: 14px; }
  .left map-button[big] { margin: 0 0 10px; }
  .right { right: 49px; top: 49px; }
  .low { right: 49px; bottom: 49px; }
  .credit { position: absolute; left: 10px; bottom: 4px; font-size: 21px; line-height: 25px; }
`, `
  <map-canvas></map-canvas>
  <div class="scale">833 km</div>
  <div class="tools left">
    <map-button big><svg width="50" height="50" viewBox="5 5 14 14" fill="currentColor"><path d="M7 14H5v5h5v-2H7v-3zm-2-4h2V7h3V5H5v5zm12 7h-3v2h5v-5h-2v3zM14 5v2h3v3h2V5h-5z"/></svg></map-button>
    <map-button><svg width="62" height="70" viewBox="0 0 62 70" fill="none" stroke="currentColor" stroke-width="7"><path d="M31 5 L57 25 L31 45 L5 25Z M2 41 L31 64 L60 41"/></svg></map-button>
    <map-button><svg width="64" height="64" viewBox="3 3 18 18" fill="currentColor"><path d="M3 17.250V21h3.750L17.810 9.940l-3.750-3.750L3 17.250zM20.710 7.040c.39-.39.39-1.020 0-1.410l-2.340-2.340c-.39-.39-1.020-.39-1.410 0l-1.830 1.830 3.750 3.750 1.830-1.830z"/></svg></map-button>
  </div>
  <div class="tools right">
    <map-button><svg width="77" height="77" viewBox="1 1 22 22" fill="currentColor"><path d="M12 8c-2.210 0-4 1.790-4 4s1.790 4 4 4 4-1.790 4-4-1.790-4-4-4zm8.940 3c-.46-4.170-3.770-7.480-7.940-7.940V1h-2v2.060C6.830 3.520 3.520 6.830 3.060 11H1v2h2.060c.46 4.170 3.770 7.480 7.940 7.940V23h2v-2.060c4.170-.46 7.480-3.770 7.940-7.940H23v-2h-2.060zM12 19c-3.870 0-7-3.130-7-7s3.130-7 7-7 7 3.130 7 7-3.130 7-7 7z"/></svg></map-button>
    <map-button><svg width="70" height="70" viewBox="2 2 20 20" fill="currentColor"><path d="M12 10.900c-.61 0-1.100.49-1.100 1.100s.49 1.100 1.100 1.100c.61 0 1.100-.49 1.100-1.100s-.49-1.100-1.100-1.100zM12 2C6.480 2 2 6.480 2 12s4.480 10 10 10 10-4.480 10-10S17.520 2 12 2zm2.190 12.190L6 18l3.810-8.190L18 6l-3.810 8.190z"/></svg></map-button>
  </div>
  <div class="tools low">
    <map-button><svg width="70" height="46" viewBox="0 0 70 46" fill="currentColor"><path d="M5 45 L0 40 L25 14 L39 28 L65 0 L70 5 L40 38 L26 24Z"/></svg></map-button>
  </div>
  <div class="credit">© OpenStreetMap contributors</div>
`);

define('action-bar', `
  :host { display: flex; align-items: center; height: 147px; background: #fff; border-radius: 72px 72px 0 0;
    color: #1e84f2; font-size: 56px; font-weight: 500; letter-spacing: 5px; }
  button { flex: 1; display: flex; align-items: center; justify-content: center; height: 100%; padding-top: 2px; letter-spacing: inherit; }
  .search { gap: 55px; padding-left: 36px; }
  .record { gap: 16px; padding-right: 32px; }
  i { width: 4px; height: 113px; background: #c8d2dc; }
`, `
  <button class="search"><svg width="112" height="112" viewBox="0 0 112 112">${magnifier}</svg>Search</button>
  <i></i>
  <button class="record"><svg width="98" height="98" viewBox="0 0 98 98"><circle cx="49" cy="49" r="49" fill="#e97158"/><circle cx="49" cy="49" r="25" fill="#de533d"/></svg>Record</button>
`);

define('nav-bar', `
  :host { display: flex; align-items: center; justify-content: space-between; height: 168px; padding: 0 279px 0 276px; background: #000; }
`, `
  <button aria-label="Back"><svg width="50" height="56" viewBox="0 0 50 56" fill="#999"><path d="M46 1 Q49 -1 49 3 V53 Q49 57 46 55 L2 31 Q-1 28 2 25Z"/></svg></button>
  <button aria-label="Home"><svg width="50" height="50" viewBox="0 0 50 50" fill="#999"><circle cx="25" cy="25" r="25"/></svg></button>
  <button aria-label="Recent apps"><svg width="52" height="52" viewBox="0 0 52 52" fill="#999"><rect width="52" height="52" rx="4"/></svg></button>
`);

define('trek-app', `
  :host { display: flex; flex-direction: column; min-height: 100vh; }
  .cards { display: flex; flex-direction: column; gap: 14px; padding: 0 28px 21px; }
`, `
  <status-bar></status-bar>
  <app-bar></app-bar>
  <div class="cards"><trip-card></trip-card><metric-cards></metric-cards></div>
  <map-view></map-view>
  <action-bar></action-bar>
  <nav-bar></nav-bar>
`);
</script>
</body>
</html>
